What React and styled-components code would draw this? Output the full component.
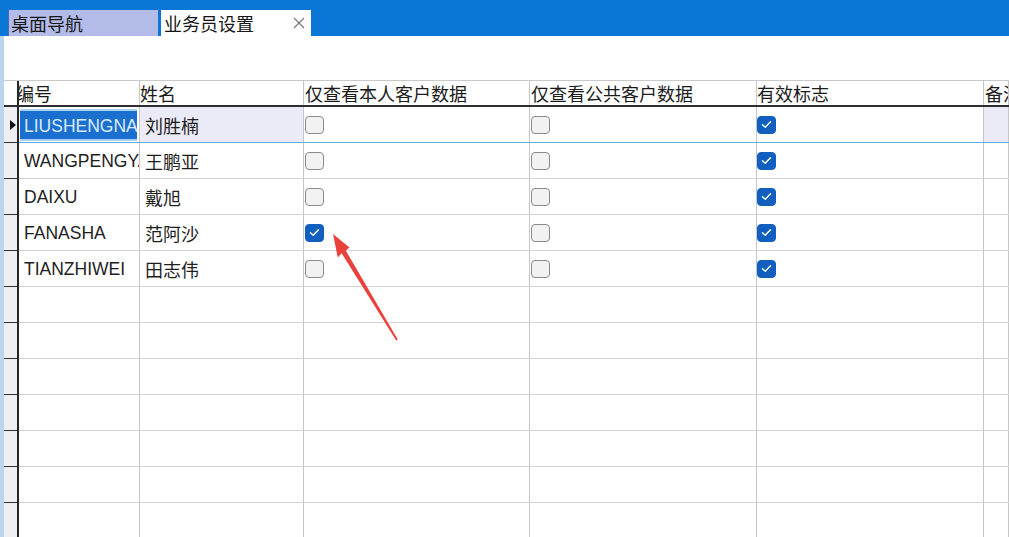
import React from 'react';
import styled, { createGlobalStyle } from 'styled-components';

const GlobalStyle = createGlobalStyle`
    html, body {
        margin:0;
        padding:0;
        background:#fff;
        overflow:hidden;
    }
    body{
        font-family:"Liberation Sans", "Noto Sans CJK SC", sans-serif;
        color:#1b1b1b;
    }
`

const COLS = '15px 121px 164px 226px 227px 227px 1fr';

const salesmen = [
    { code: 'LIUSHENGNAN', name: '刘胜楠', own: false, pub: false, valid: true },
    { code: 'WANGPENGYA', name: '王鹏亚', own: false, pub: false, valid: true },
    { code: 'DAIXU', name: '戴旭', own: false, pub: false, valid: true },
    { code: 'FANASHA', name: '范阿沙', own: true, pub: false, valid: true },
    { code: 'TIANZHIWEI', name: '田志伟', own: false, pub: false, valid: true },
];

const EMPTY_ROWS = 7;

function CheckBox({ checked }) {
    return (
        <Box checked={checked}>
            {checked && (
                <svg width="11" height="9" viewBox="0 0 11 9">
                    <path d="M1.5 4.8 L4.2 7.2 L9.5 1.8" fill="none" stroke="#fff" strokeWidth="1.4" strokeLinecap="round" strokeLinejoin="round" />
                </svg>
            )}
        </Box>
    )
}

function App() {
    return (
        <Page>
            <GlobalStyle />
            <TabBar>
                <Tab>桌面导航</Tab>
                <Tab active>
                    业务员设置
                    <CloseBtn>
                        <svg width="12" height="12" viewBox="0 0 12 12">
                            <path d="M1 1 L11 11 M11 1 L1 11" stroke="#7a7a7a" strokeWidth="1.2" />
                        </svg>
                    </CloseBtn>
                </Tab>
            </TabBar>
            <Body>
                <Grid>
                    <HeaderRow>
                        <Indicator header />
                        <HeadCell first>编号</HeadCell>
                        <HeadCell>姓名</HeadCell>
                        <HeadCell pad={1}>仅查看本人客户数据</HeadCell>
                        <HeadCell pad={1}>仅查看公共客户数据</HeadCell>
                        <HeadCell>有效标志</HeadCell>
                        <HeadCell pad={1}>备注</HeadCell>
                    </HeaderRow>
                    {salesmen.map((s, i) => {
                        const current = i === 0;
                        return (
                            <Row key={s.code} current={current}>
                                <Indicator>{current && <Pointer />}</Indicator>
                                <Cell>
                                    {current ? <Focus>{s.code}</Focus> : <Code>{s.code}</Code>}
                                </Cell>
                                <Cell tinted={current}><Name>{s.name}</Name></Cell>
                                <Cell><CheckBox checked={s.own} /></Cell>
                                <Cell><CheckBox checked={s.pub} /></Cell>
                                <Cell pad={0}><CheckBox checked={s.valid} /></Cell>
                                <Cell tinted={current} />
                            </Row>
                        )
                    })}
                    {Array.from({ length: EMPTY_ROWS }).map((_, i) => (
                        <Row key={'e' + i}>
                            <Indicator />
                            <Cell /><Cell /><Cell /><Cell /><Cell /><Cell />
                        </Row>
                    ))}
                </Grid>
            </Body>
            <Arrow width="1009" height="537" viewBox="0 0 1009 537">
                <polygon
                    points="333,234 349.5,247.5 345.8,250.6 397.8,339.4 396.2,340.6 341.6,253.2 337.8,257.4"
                    fill="#e8423b"
                />
            </Arrow>
        </Page>
    )
}

export default App;

const Page = styled.div`
    position:relative;
    width:1009px;
    height:537px;
    overflow:hidden;
    display:flex;
    flex-direction:column;
`

const TabBar = styled.div`
    height:36px;
    box-sizing:border-box;
    background:#0a77d6;
    padding:10px 0 0 8px;
    display:flex;
    gap:3px;
    flex-shrink:0;
`

const Tab = styled.div`
    width:150px;
    height:26px;
    box-sizing:border-box;
    display:flex;
    align-items:center;
    padding-left:${p => p.active ? 3 : 2}px;
    font-family:"Noto Sans CJK SC", sans-serif;
    font-size:18px;
    color:#161616;
    background:${p => p.active ? '#ffffff' : '#b3bbe8'};
    border-left:${p => p.active ? 'none' : '1px solid #4a67b8'};
`

const CloseBtn = styled.span`
    margin-left:auto;
    margin-right:6px;
    display:flex;
    align-items:center;
`

const Body = styled.div`
    flex:1;
    border-left:4px solid #bcd5ee;
    padding-top:44px;
    overflow:hidden;
`

const Grid = styled.div`
    display:flex;
    flex-direction:column;
`

const HeaderRow = styled.div`
    display:grid;
    grid-template-columns:${COLS};
    height:27px;
    box-sizing:border-box;
    border-top:1px solid #c9c9c9;
    border-bottom:2px solid #2e2e2e;
`

const HeadCell = styled.div`
    position:relative;
    display:flex;
    align-items:center;
    overflow:hidden;
    white-space:nowrap;
    padding-left:${p => p.pad || 0}px;
    margin-left:${p => p.first ? '-3px' : '0'};
    z-index:${p => p.first ? 0 : 'auto'};
    border-right:1px solid #c6c6c6;
    font-family:"Noto Sans CJK SC", sans-serif;
    font-size:18px;
    color:#1b1b1b;
`

const Row = styled.div`
    display:grid;
    grid-template-columns:${COLS};
    height:36px;
    flex-shrink:0;
    box-sizing:border-box;
    border-bottom:1px solid ${p => p.current ? '#62acd9' : '#d3d3d3'};
`

const Indicator = styled.div`
    position:relative;
    z-index:1;
    background:${p => p.header ? '#ffffff' : '#efeff2'};
    border-right:2px solid #262626;
    box-shadow:${p => p.header ? 'none' : '0 1px 0 #2e2e2e'};
    display:flex;
    align-items:center;
    justify-content:flex-end;
    padding-right:1px;
`

const Pointer = styled.span`
    width:0;
    height:0;
    border-top:5px solid transparent;
    border-bottom:5px solid transparent;
    border-left:6px solid #111;
`

const Cell = styled.div`
    display:flex;
    align-items:center;
    overflow:hidden;
    padding-left:${p => p.pad ?? 1}px;
    background:${p => p.tinted ? '#ebebf8' : 'transparent'};
    border-right:1px solid #c6c6c6;
`

const Code = styled.span`
    padding:2px 0 0 4px;
    white-space:nowrap;
    font-family:"Liberation Sans", sans-serif;
    font-size:17.5px;
    color:#1e1e1e;
`

const Name = styled.span`
    padding-left:4px;
    white-space:nowrap;
    font-family:"Noto Sans CJK SC", sans-serif;
    font-size:18px;
    color:#1e1e1e;
`

const Focus = styled.div`
    align-self:stretch;
    flex:1;
    margin:2px 2px 1px 0;
    box-sizing:border-box;
    background:#1b6fcf;
    border-top:2px solid #a9d0f3;
    border-bottom:2px solid #a9d0f3;
    display:flex;
    align-items:center;
    padding:2px 0 0 4px;
    overflow:hidden;
    white-space:nowrap;
    font-family:"Liberation Sans", sans-serif;
    font-size:17.5px;
    color:#d9ebff;
`

const Box = styled.span`
    width:19px;
    height:18px;
    box-sizing:border-box;
    border-radius:4px;
    border:${p => p.checked ? '1px solid #1160bf' : '1.6px solid #8a8a8a'};
    background:${p => p.checked ? '#1160bf' : '#f2f2f2'};
    display:flex;
    align-items:center;
    justify-content:center;
`

const Arrow = styled.svg`
    position:absolute;
    left:0;
    top:0;
    pointer-events:none;
`
